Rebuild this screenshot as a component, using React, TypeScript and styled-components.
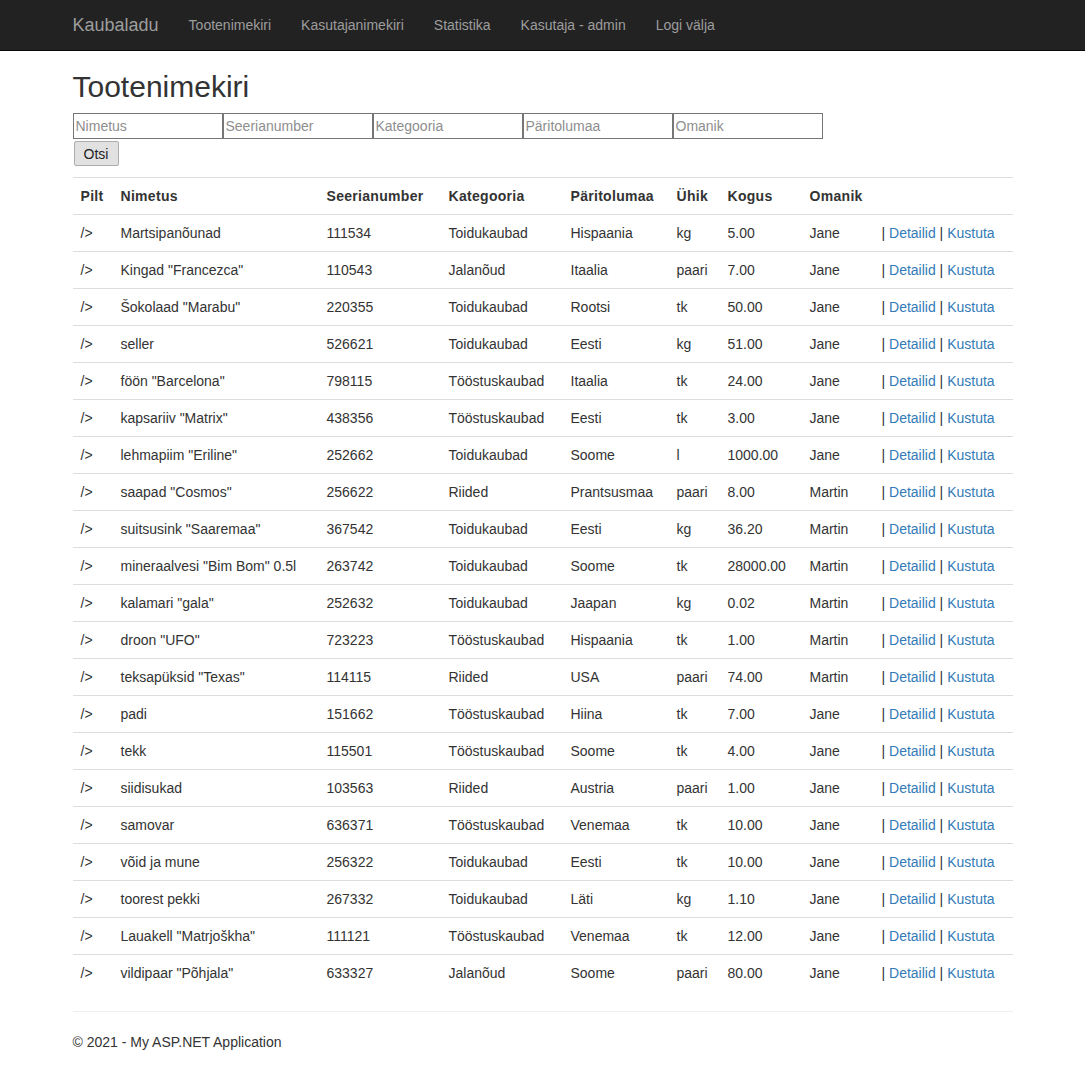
import React from "react";
import styled, { createGlobalStyle } from "styled-components";

type Product = {
  name: string;
  serial: string;
  category: string;
  origin: string;
  unit: string;
  amount: string;
  owner: string;
};

const products: Product[] = [
  { name: "Martsipanõunad", serial: "111534", category: "Toidukaubad", origin: "Hispaania", unit: "kg", amount: "5.00", owner: "Jane" },
  { name: 'Kingad "Francezca"', serial: "110543", category: "Jalanõud", origin: "Itaalia", unit: "paari", amount: "7.00", owner: "Jane" },
  { name: 'Šokolaad "Marabu"', serial: "220355", category: "Toidukaubad", origin: "Rootsi", unit: "tk", amount: "50.00", owner: "Jane" },
  { name: "seller", serial: "526621", category: "Toidukaubad", origin: "Eesti", unit: "kg", amount: "51.00", owner: "Jane" },
  { name: 'föön "Barcelona"', serial: "798115", category: "Tööstuskaubad", origin: "Itaalia", unit: "tk", amount: "24.00", owner: "Jane" },
  { name: 'kapsariiv "Matrix"', serial: "438356", category: "Tööstuskaubad", origin: "Eesti", unit: "tk", amount: "3.00", owner: "Jane" },
  { name: 'lehmapiim "Eriline"', serial: "252662", category: "Toidukaubad", origin: "Soome", unit: "l", amount: "1000.00", owner: "Jane" },
  { name: 'saapad "Cosmos"', serial: "256622", category: "Riided", origin: "Prantsusmaa", unit: "paari", amount: "8.00", owner: "Martin" },
  { name: 'suitsusink "Saaremaa"', serial: "367542", category: "Toidukaubad", origin: "Eesti", unit: "kg", amount: "36.20", owner: "Martin" },
  { name: 'mineraalvesi "Bim Bom" 0.5l', serial: "263742", category: "Toidukaubad", origin: "Soome", unit: "tk", amount: "28000.00", owner: "Martin" },
  { name: 'kalamari "gala"', serial: "252632", category: "Toidukaubad", origin: "Jaapan", unit: "kg", amount: "0.02", owner: "Martin" },
  { name: 'droon "UFO"', serial: "723223", category: "Tööstuskaubad", origin: "Hispaania", unit: "tk", amount: "1.00", owner: "Martin" },
  { name: 'teksapüksid "Texas"', serial: "114115", category: "Riided", origin: "USA", unit: "paari", amount: "74.00", owner: "Martin" },
  { name: "padi", serial: "151662", category: "Tööstuskaubad", origin: "Hiina", unit: "tk", amount: "7.00", owner: "Jane" },
  { name: "tekk", serial: "115501", category: "Tööstuskaubad", origin: "Soome", unit: "tk", amount: "4.00", owner: "Jane" },
  { name: "siidisukad", serial: "103563", category: "Riided", origin: "Austria", unit: "paari", amount: "1.00", owner: "Jane" },
  { name: "samovar", serial: "636371", category: "Tööstuskaubad", origin: "Venemaa", unit: "tk", amount: "10.00", owner: "Jane" },
  { name: "võid ja mune", serial: "256322", category: "Toidukaubad", origin: "Eesti", unit: "tk", amount: "10.00", owner: "Jane" },
  { name: "toorest pekki", serial: "267332", category: "Toidukaubad", origin: "Läti", unit: "kg", amount: "1.10", owner: "Jane" },
  { name: 'Lauakell "Matrjoškha"', serial: "111121", category: "Tööstuskaubad", origin: "Venemaa", unit: "tk", amount: "12.00", owner: "Jane" },
  { name: 'vildipaar "Põhjala"', serial: "633327", category: "Jalanõud", origin: "Soome", unit: "paari", amount: "80.00", owner: "Jane" },
];

const columns = [
  { title: "Pilt", width: 40 },
  { title: "Nimetus", width: 206 },
  { title: "Seerianumber", width: 122 },
  { title: "Kategooria", width: 122 },
  { title: "Päritolumaa", width: 106 },
  { title: "Ühik", width: 51 },
  { title: "Kogus", width: 82 },
  { title: "Omanik", width: 72 },
  { title: "", width: 139 },
];

const navLinks = ["Tootenimekiri", "Kasutajanimekiri", "Statistika", "Kasutaja - admin", "Logi välja"];
const searchFields = ["Nimetus", "Seerianumber", "Kategooria", "Päritolumaa", "Omanik"];

export default function App() {
  return (
    <>
      <GlobalStyle />
      <Navbar>
        <NavContainer>
          <Brand href="#">Kaubaladu</Brand>
          <NavList>
            {navLinks.map((l) => (
              <li key={l}>
                <NavLink href="#">{l}</NavLink>
              </li>
            ))}
          </NavList>
        </NavContainer>
      </Navbar>

      <Container>
        <Title>Tootenimekiri</Title>
        <SearchForm>
          <InputRow>
            {searchFields.map((f) => (
              <SearchInput key={f} placeholder={f} />
            ))}
          </InputRow>
          <SearchButton type="button">Otsi</SearchButton>
        </SearchForm>

        <Table>
          <colgroup>
            {columns.map((c, i) => (
              <col key={i} style={{ width: c.width }} />
            ))}
          </colgroup>
          <tbody>
            <tr>
              {columns.map((c, i) => (
                <Th key={i}>{c.title}</Th>
              ))}
            </tr>
            {products.map((p) => (
              <tr key={p.serial + p.name}>
                <Td>/&gt;</Td>
                <Td>{p.name}</Td>
                <Td>{p.serial}</Td>
                <Td>{p.category}</Td>
                <Td>{p.origin}</Td>
                <Td>{p.unit}</Td>
                <Td>{p.amount}</Td>
                <Td>{p.owner}</Td>
                <Td>
                  | <Link href="#">Detailid</Link> | <Link href="#">Kustuta</Link>
                </Td>
              </tr>
            ))}
          </tbody>
        </Table>

        <Rule />
        <Footer>© 2021 - My ASP.NET Application</Footer>
      </Container>
    </>
  );
}

const GlobalStyle = createGlobalStyle`
  * {
    box-sizing: border-box;
  }
  body {
    margin: 0;
    padding-top: 50px;
    font-family: "Liberation Sans", Arial, Helvetica, sans-serif;
    font-size: 14px;
    line-height: 1.42857143;
    color: #333;
    background: #fff;
  }
`;

const Navbar = styled.nav`
  position: fixed;
  top: 0;
  left: 0;
  right: 0;
  min-height: 50px;
  background-color: #222;
  border-bottom: 1px solid #080808;
  z-index: 1030;
`;

const NavContainer = styled.div`
  width: 970px;
  margin: 0 auto;
  padding: 0 15px;
  display: flex;
  align-items: flex-start;
`;

const Brand = styled.a`
  margin-left: -15px;
  padding: 15px;
  height: 50px;
  font-size: 18px;
  line-height: 20px;
  color: #9d9d9d;
  text-decoration: none;
`;

const NavList = styled.ul`
  display: flex;
  list-style: none;
  margin: 0;
  padding: 0;
`;

const NavLink = styled.a`
  display: block;
  padding: 15px;
  line-height: 20px;
  color: #9d9d9d;
  text-decoration: none;
`;

const Container = styled.div`
  width: 970px;
  margin: 0 auto;
  padding: 0 15px;
`;

const Title = styled.h2`
  margin: 20px 0 10px;
  font-size: 30px;
  font-weight: 500;
  line-height: 1.1;
`;

const SearchForm = styled.form`
  margin: 0 0 11px;
`;

const InputRow = styled.div`
  display: flex;
`;

const SearchInput = styled.input`
  width: 150px;
  height: 26px;
  padding: 1px 2px;
  border: 1px solid #767676;
  font-family: "Liberation Sans", Arial, sans-serif;
  font-size: 14px;
  color: #333;

  &::placeholder {
    color: #8e8e8e;
  }
`;

const SearchButton = styled.button`
  display: block;
  margin: 2px 0 0 1px;
  width: 45px;
  height: 25px;
  padding: 1px 0;
  border: 1px solid #adadad;
  border-radius: 2px;
  background: #e1e1e1;
  font-family: "Liberation Sans", Arial, sans-serif;
  font-size: 14px;
  color: #222;
`;

const Table = styled.table`
  width: 100%;
  table-layout: fixed;
  border-collapse: collapse;
  border-spacing: 0;
  margin-bottom: 20px;
`;

const Th = styled.th`
  padding: 8px;
  text-align: left;
  font-weight: bold;
  line-height: 20px;
  letter-spacing: 0.3px;
  border-top: 1px solid #ddd;
  white-space: nowrap;
`;

const Td = styled.td`
  padding: 8px;
  line-height: 20px;
  border-top: 1px solid #ddd;
  white-space: nowrap;
`;

const Link = styled.a`
  color: #337ab7;
  text-decoration: none;
`;

const Rule = styled.hr`
  margin: 20px 0;
  border: 0;
  border-top: 1px solid #eee;
`;

const Footer = styled.footer`
  margin: 0 0 10px;
  line-height: 20px;
`;
